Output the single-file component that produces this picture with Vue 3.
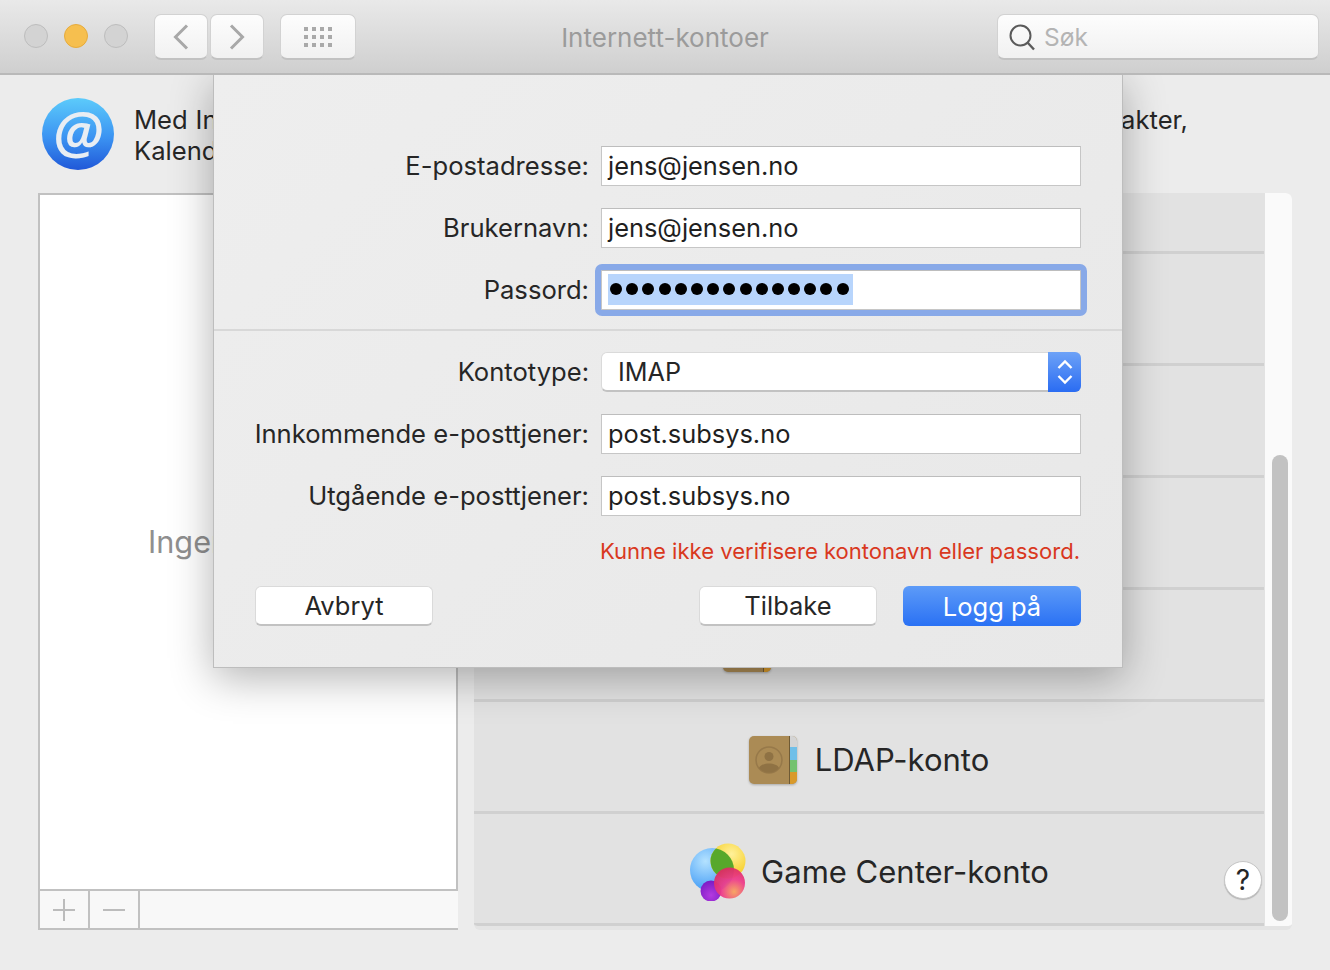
<script setup>
const dots = Array.from({ length: 15 }, (_, i) => i)
const gridCells = Array.from({ length: 12 }, (_, i) => i)
const rows = [
  { id: 1, first: true },
  { id: 2 },
  { id: 3 },
  { id: 4 },
  { id: 5, label: 'CardDAV-konto', icon: 'book' },
  { id: 6, label: 'LDAP-konto', icon: 'book' },
  { id: 7, label: 'Game Center-konto', icon: 'game' }
]
</script>

<template>
  <div class="window">
    <header class="titlebar">
      <div class="lights">
        <span class="light"></span>
        <span class="light yellow"></span>
        <span class="light"></span>
      </div>
      <div class="nav">
        <button class="tb-btn nav-btn">
          <svg width="16" height="26" viewBox="0 0 16 26"><path d="M14 1.5 2.5 13 14 24.5" fill="none" stroke="#a8a8a8" stroke-width="3"/></svg>
        </button>
        <button class="tb-btn nav-btn">
          <svg width="16" height="26" viewBox="0 0 16 26"><path d="M2 1.5 13.5 13 2 24.5" fill="none" stroke="#a8a8a8" stroke-width="3"/></svg>
        </button>
      </div>
      <button class="tb-btn grid-btn">
        <span class="grid-dots"><i v-for="c in gridCells" :key="c"></i></span>
      </button>
      <div class="title">Internett-kontoer</div>
      <div class="search">
        <svg width="28" height="28" viewBox="0 0 28 28"><circle cx="12.5" cy="12.5" r="10" fill="none" stroke="#5a5a5a" stroke-width="2"/><path d="M19.5 19.5 26 26.5" stroke="#5a5a5a" stroke-width="2.4" fill="none"/></svg>
        <span class="search-text">Søk</span>
      </div>
    </header>

    <main class="content">
      <section class="intro">
        <div class="at-icon"><span>@</span></div>
        <p class="intro-text">
          <span class="line-one">Med Internett-kontoer kan du konfigurere kontoene dine for Mail, Meldinger, Kontakter,</span>
          <span class="line-two">Kalender og andre programmer.</span>
        </p>
      </section>

      <section class="panels">
        <div class="left">
          <div class="list"><span class="empty">Ingen kontoer</span></div>
          <div class="list-bar">
            <span class="bar-btn">
              <svg width="24" height="24" viewBox="0 0 24 24"><path d="M12 1v22M1 12h22" stroke="#bcbcbc" stroke-width="2"/></svg>
            </span>
            <span class="bar-btn">
              <svg width="24" height="24" viewBox="0 0 24 24"><path d="M1 12h22" stroke="#bcbcbc" stroke-width="2"/></svg>
            </span>
          </div>
        </div>

        <div class="right">
          <div class="rows">
            <div v-for="r in rows" :key="r.id" class="row" :class="{ first: r.first }">
              <svg v-if="r.icon === 'book'" class="book" width="48" height="48" viewBox="0 0 48 48">
                <rect x="0" y="0" width="48" height="48" rx="5" fill="#ab8b55"/>
                <path d="M40 0h3a5 5 0 0 1 5 5v6h-8z" fill="#d4d4d4"/>
                <rect x="40" y="11" width="8" height="13" fill="#70bfe8"/>
                <rect x="40" y="24" width="8" height="12" fill="#74c26f"/>
                <path d="M40 36h8v7a5 5 0 0 1-5 5h-3z" fill="#d99a2b"/>
                <rect x="40" y="0" width="1" height="48" fill="#6f5a34"/>
                <circle cx="20" cy="24" r="13" fill="none" stroke="#97794a" stroke-width="1.5"/>
                <circle cx="20" cy="20.500" r="4.500" fill="#8f7244"/>
                <path d="M10 32c2-6 18-6 20 0a13 13 0 0 1-20 0z" fill="#8f7244"/>
              </svg>
              <svg v-else-if="r.icon === 'game'" class="game" width="58" height="58" viewBox="0 0 58 58">
                <defs>
                  <radialGradient id="gb" cx="35%" cy="30%" r="75%"><stop offset="0" stop-color="#b4e2ff"/><stop offset="1" stop-color="#3b97f5"/></radialGradient>
                  <radialGradient id="gy" cx="60%" cy="30%" r="75%"><stop offset="0" stop-color="#fff19a"/><stop offset="1" stop-color="#f5c814"/></radialGradient>
                  <radialGradient id="gp" cx="65%" cy="78%" r="80%"><stop offset="0" stop-color="#f8a35c"/><stop offset=".5" stop-color="#ee3c8a"/><stop offset="1" stop-color="#dc2c62"/></radialGradient>
                  <radialGradient id="gv" cx="50%" cy="70%" r="70%"><stop offset="0" stop-color="#b43ae0"/><stop offset="1" stop-color="#7a1bc4"/></radialGradient>
                  <clipPath id="blueClip"><circle cx="23" cy="27" r="22"/></clipPath>
                </defs>
                <circle cx="23" cy="27" r="22" fill="url(#gb)"/>
                <circle cx="39" cy="18" r="17.500" fill="url(#gy)"/>
                <circle cx="39" cy="18" r="17.500" fill="#57a82b" clip-path="url(#blueClip)"/>
                <circle cx="22" cy="48" r="10.500" fill="url(#gv)"/>
                <circle cx="40.500" cy="40" r="15.500" fill="url(#gp)" fill-opacity=".94"/>
              </svg>
              <span v-if="r.label" class="row-label">{{ r.label }}</span>
            </div>
          </div>
          <div class="scroll-track"><div class="scroll-thumb"></div></div>
          <button class="help">?</button>
        </div>
      </section>
    </main>

    <div class="sheet">
      <div class="form">
        <label class="f-label">E-postadresse:</label>
        <div class="input">jens@jensen.no</div>
        <label class="f-label">Brukernavn:</label>
        <div class="input">jens@jensen.no</div>
        <label class="f-label">Passord:</label>
        <div class="input focused">
          <span class="selection"><i v-for="d in dots" :key="d" class="dot"></i></span>
        </div>
      </div>
      <div class="divider"></div>
      <div class="form">
        <label class="f-label">Kontotype:</label>
        <div class="select">
          <span class="select-text">IMAP</span>
          <span class="stepper">
            <svg width="18" height="28" viewBox="0 0 18 28"><path d="M2.500 10 9 3.500 15.500 10M2.500 18 9 24.500 15.500 18" fill="none" stroke="#fff" stroke-width="2.400"/></svg>
          </span>
        </div>
        <label class="f-label">Innkommende e-posttjener:</label>
        <div class="input">post.subsys.no</div>
        <label class="f-label">Utgående e-posttjener:</label>
        <div class="input">post.subsys.no</div>
      </div>
      <p class="error">Kunne ikke verifisere kontonavn eller passord.</p>
      <div class="actions">
        <button class="btn">Avbryt</button>
        <span class="spacer"></span>
        <button class="btn">Tilbake</button>
        <button class="btn primary">Logg på</button>
      </div>
    </div>
  </div>
</template>

<style>
html, body { margin: 0; background: #ececec; }
</style>

<style scoped>
.window {
  position: relative;
  width: 1330px;
  height: 970px;
  overflow: hidden;
  background: #ececec;
  font-family: Inter, "Noto Sans", sans-serif;
  color: #262626;
}
button { font-family: inherit; padding: 0; }

.titlebar {
  display: flex;
  align-items: flex-start;
  box-sizing: border-box;
  height: 75px;
  padding: 14px 11px 0 24px;
  background: linear-gradient(#e9e9e9, #cfcfcf);
  border-bottom: 2px solid #b9b9b9;
  position: relative;
  z-index: 2;
}
.lights { display: flex; gap: 16px; margin-top: 10px; }
.light {
  width: 24px; height: 24px; box-sizing: border-box; border-radius: 50%;
  background: #d3d3d3; border: 1px solid #bdbdbd;
}
.light.yellow { background: #f6bf4f; border-color: #e6ab3c; }
.tb-btn {
  box-sizing: border-box; height: 46px; border-radius: 7px;
  background: linear-gradient(#fdfdfd, #f1f1f1);
  border: 1px solid #d2d2d2; border-bottom: 2px solid #c2c2c2;
  display: flex; align-items: center; justify-content: center;
}
.nav { display: flex; gap: 2px; margin-left: 26px; }
.nav-btn { width: 54px; }
.grid-btn { width: 76px; margin-left: 16px; }
.grid-dots { display: grid; grid-template-columns: repeat(4, 4px); grid-auto-rows: 4px; gap: 4px; }
.grid-dots i { background: #a9a9a9; }
.title {
  position: absolute; left: 0; right: 0; top: 22px;
  text-align: center; font-size: 26px; line-height: 32px; color: #9b9b9b;
}
.search {
  margin-left: auto; width: 322px; height: 46px; box-sizing: border-box;
  display: flex; align-items: center; gap: 8px; padding-left: 10px;
  border-radius: 7px; background: linear-gradient(#fdfdfd, #f1f1f1);
  border: 1px solid #d2d2d2; border-bottom: 2px solid #c2c2c2;
}
.search-text { font-size: 24.500px; color: #b4b4b4; }

.content { padding: 23px 38px 0 38px; }
.intro { display: flex; align-items: flex-start; padding-left: 4px; height: 95px; }
.at-icon {
  width: 72px; height: 72px; border-radius: 50%; flex: none;
  background: linear-gradient(#5ccbfb, #3b93f2 55%, #2058d8);
  display: flex; align-items: center; justify-content: center;
  color: #e8edf3; font-family: "Open Sans", sans-serif; font-style: italic; font-weight: 600;
  font-size: 58px; line-height: 72px;
}
.at-icon span { position: relative; top: -3px; }
.intro-text {
  margin: 6px 0 0 20px; font-size: 25.600px; line-height: 31px;
}
.line-one { display: block; width: 1054px; text-align-last: justify; white-space: nowrap; overflow: hidden; }
.line-two { display: block; white-space: nowrap; }

.panels { display: flex; align-items: stretch; height: 737px; gap: 16px; }
.left { width: 420px; display: flex; flex-direction: column; flex: none; }
.list {
  flex: 1; box-sizing: border-box; background: #fff;
  border: 2px solid #c1c1c1; border-bottom: 0;
  display: flex; align-items: center; justify-content: center;
}
.empty { font-size: 30.700px; color: #8f8f8f; position: relative; top: -1px; }
.list-bar {
  height: 41px; box-sizing: border-box; display: flex;
  background: #f8f8f8;
  border-top: 2px solid #c1c1c1; border-bottom: 2px solid #c1c1c1; border-left: 2px solid #c1c1c1;
}
.bar-btn {
  width: 50px; display: flex; align-items: center; justify-content: center;
  box-sizing: border-box; border-right: 2px solid #c1c1c1;
}

.right {
  flex: none; width: 818px; position: relative; display: flex;
  border-radius: 6px; background: #e2e2e2;
  height: 737px; overflow: hidden; border-bottom: 4px solid #e4e4e4; box-sizing: border-box;
}
.rows { width: 790px; flex: none; }
.row {
  height: 112px; box-sizing: border-box; border-bottom: 3px solid #d0d0d0;
  padding-top: 6px;
  display: flex; align-items: center; justify-content: center; gap: 18px;
  font-size: 31px; color: #262626;
}
.row.first { height: 61px; }
.book { filter: drop-shadow(0 1px 1px rgba(0,0,0,.25)); }
.game { margin-right: -4px; }
.scroll-track { flex: 1; background: #fafafa; display: flex; justify-content: center; padding: 262px 0 0; margin-left: 1px; box-sizing: border-box; }
.scroll-thumb { width: 16px; height: 466px; border-radius: 8px; background: #c2c2c2; margin-left: 3px; }
.help {
  position: absolute; left: 750px; top: 668px; width: 38px; height: 38px; border-radius: 50%;
  background: #fff; border: 1px solid #c6c6c6; box-shadow: 0 1px 1px rgba(0,0,0,.2);
  font-size: 28px; color: #262626; line-height: 34px;
}

.sheet {
  position: absolute; left: 213px; top: 74px; width: 910px; height: 594px;
  box-sizing: border-box; padding: 72px 41px 0 41px;
  background: linear-gradient(135deg, #eeeeee, #e8e8e8);
  border: 1px solid #bdbdbd; border-top: 0;
  box-shadow: 0 10px 40px rgba(0,0,0,.3);
}
.form {
  display: grid; grid-template-columns: 344px 480px; column-gap: 12px; row-gap: 22px;
  align-items: center; margin-left: -10px;
}
.f-label { text-align: right; font-size: 25.600px; line-height: 40px; color: #262626; white-space: nowrap; }
.input {
  height: 40px; box-sizing: border-box; background: #fff;
  border: 1px solid #c6c6c6; border-top-color: #bdbdbd;
  padding-left: 6px; font-size: 25.400px; line-height: 38px; color: #1f1f1f;
}
.input.focused {
  outline: 6px solid #88a9e8; outline-offset: 0; border-radius: 1px;
  display: flex; align-items: center;
}
.selection {
  display: flex; align-items: center; gap: 4.200px; height: 31px; width: 245px;
  box-sizing: border-box; padding-left: 2px; background: #b8d5fc;
  position: relative; top: -1px;
}
.dot { width: 12px; height: 12px; border-radius: 50%; background: #000; flex: none; }
.divider { height: 2px; background: #d8d8d8; margin: 19px -41px 21px -41px; }
.select {
  height: 40px; box-sizing: border-box; background: #fff; border-radius: 6px;
  border: 1px solid #dadada; border-bottom: 2px solid #c2c2c2;
  display: flex; align-items: center; justify-content: space-between; overflow: visible; position: relative;
}
.select-text { font-size: 25.200px; padding-left: 16px; }
.stepper {
  width: 33px; height: 40px; flex: none; display: flex; align-items: center; justify-content: center;
  background: linear-gradient(#6da2f7, #2a6cf2);
  margin: -1px -1px -2px 0; border-radius: 0 6px 6px 0;
}
.error {
  margin: 19px 1px 0 0; text-align: right; font-size: 22.060px; line-height: 32px; color: #d9381e;
}
.actions { display: flex; gap: 26px; margin-top: 19px; }
.spacer { flex: 1; }
.btn {
  width: 178px; height: 40px; box-sizing: border-box; border-radius: 6px;
  background: #fff; border: 1px solid #dadada; border-bottom: 2px solid #c2c2c2;
  font-size: 25.500px; color: #262626;
}
.btn.primary {
  background: linear-gradient(#5d9bf8, #2a71f4); border: 0; color: #fff;
}
</style>
